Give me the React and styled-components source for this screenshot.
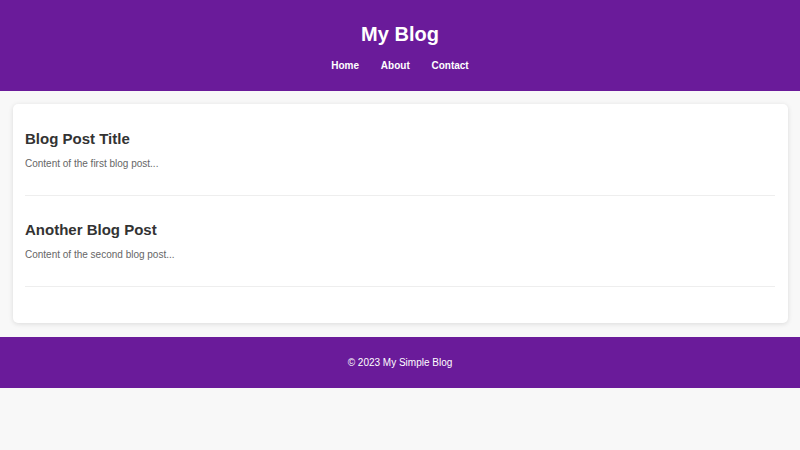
import React from "react"
import styled, { createGlobalStyle } from "styled-components"

const GlobalStyle = createGlobalStyle`
  body {
    margin: 0;
    background: #f8f8f8;
    font-family: "Liberation Sans", Arial, sans-serif;
    font-size: 10px;
    color: #333;
  }
`

const Header = styled.header`
  background: #6a1b9a;
  color: #fff;
  text-align: center;
  padding: 10px 10px;
`

const SiteTitle = styled.h1`
  font-size: 20px;
  font-weight: bold;
  margin: 13.4px 0;
`

const NavList = styled.ul`
  list-style: none;
  display: flex;
  justify-content: center;
  gap: 21.75px;
  margin: 0 0 10px;
  padding: 0;
`

const NavLink = styled.a`
  color: #fff;
  text-decoration: none;
  font-weight: bold;
  font-size: 10px;
`

const Main = styled.main`
  margin: 13.5px 12.5px;
  padding: 12.5px;
  background: #fff;
  border-radius: 5px;
  box-shadow: 0 1px 5px rgba(0, 0, 0, 0.12);
`

const Post = styled.article`
  padding-bottom: 15.5px;
  margin-bottom: 25px;
  border-bottom: 1px solid #eee;

  &:last-child {
    margin-bottom: 24px;
  }
`

const PostTitle = styled.h2`
  font-size: 15px;
  color: #333;
  margin: 13px 0 11.5px;
`

const PostBody = styled.p`
  font-size: 10px;
  color: #666;
  margin: 0 0 10px;
`

const Footer = styled.footer`
  background: #6a1b9a;
  color: #fff;
  text-align: center;
  padding: 10px;

  p {
    margin: 10px 0;
    font-size: 10px;
  }
`

const posts = [
  { title: "Blog Post Title", body: "Content of the first blog post..." },
  { title: "Another Blog Post", body: "Content of the second blog post..." },
]

export default function App() {
  return (
    <>
      <GlobalStyle />
      <Header>
        <SiteTitle>My Blog</SiteTitle>
        <nav>
          <NavList>
            <li><NavLink href="#">Home</NavLink></li>
            <li><NavLink href="#">About</NavLink></li>
            <li><NavLink href="#">Contact</NavLink></li>
          </NavList>
        </nav>
      </Header>

      <Main>
        {posts.map(post => (
          <Post key={post.title}>
            <PostTitle>{post.title}</PostTitle>
            <PostBody>{post.body}</PostBody>
          </Post>
        ))}
      </Main>

      <Footer>
        <p>&copy; 2023 My Simple Blog</p>
      </Footer>
    </>
  )
}
